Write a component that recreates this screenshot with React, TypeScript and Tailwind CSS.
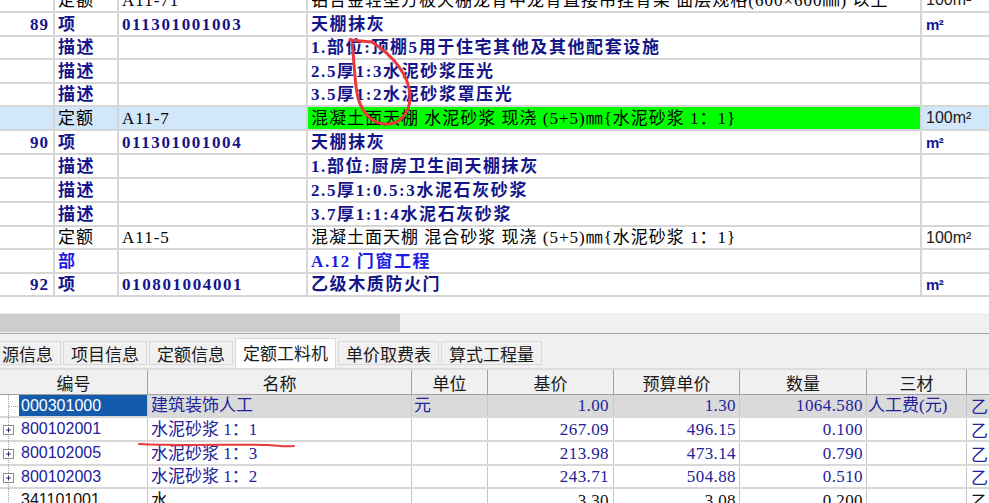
import React from 'react';

const SONG = "font-['Liberation_Serif','Noto_Sans_CJK_SC',serif]";
const HEI = "font-['Noto_Sans_CJK_SC',sans-serif]";
const SANS = "font-['Liberation_Sans','Noto_Sans_CJK_SC',sans-serif]";

type Kind = 'quota' | 'item' | 'desc' | 'part';
interface TopRow {
  h: string;
  kind: Kind;
  num?: string;
  code?: string;
  name: string;
  unit?: string;
  sel?: boolean;
  green?: boolean;
}

const topRows: TopRow[] = [
  { h: 'h-[24px]', kind: 'quota', code: 'A11-71', name: '铝合金轻型方板天棚龙骨中龙骨直接吊挂骨架 面层规格(600×600㎜) 以上', unit: '100m²' },
  { h: 'h-[24px]', kind: 'item', num: '89', code: '011301001003', name: '天棚抹灰', unit: 'm²' },
  { h: 'h-[23px]', kind: 'desc', name: '1.部位:顶棚5用于住宅其他及其他配套设施' },
  { h: 'h-[24px]', kind: 'desc', name: '2.5厚1:3水泥砂浆压光' },
  { h: 'h-[23px]', kind: 'desc', name: '3.5厚1:2水泥砂浆罩压光' },
  { h: 'h-[24px]', kind: 'quota', code: 'A11-7', name: '混凝土面天棚 水泥砂浆 现浇 (5+5)㎜{水泥砂浆 1：1}', unit: '100m²', sel: true, green: true },
  { h: 'h-[24px]', kind: 'item', num: '90', code: '011301001004', name: '天棚抹灰', unit: 'm²' },
  { h: 'h-[24px]', kind: 'desc', name: '1.部位:厨房卫生间天棚抹灰' },
  { h: 'h-[24px]', kind: 'desc', name: '2.5厚1:0.5:3水泥石灰砂浆' },
  { h: 'h-[24px]', kind: 'desc', name: '3.7厚1:1:4水泥石灰砂浆' },
  { h: 'h-[23px]', kind: 'quota', code: 'A11-5', name: '混凝土面天棚 混合砂浆 现浇 (5+5)㎜{水泥砂浆 1：1}', unit: '100m²' },
  { h: 'h-[24px]', kind: 'part', name: 'A.12 门窗工程' },
  { h: 'h-[23px]', kind: 'item', num: '92', code: '010801004001', name: '乙级木质防火门', unit: 'm²' },
];

const typeLabel: Record<Kind, string> = { quota: '定额', item: '项', desc: '描述', part: '部' };

function textCls(kind: Kind) {
  if (kind === 'quota') return 'text-black font-normal tracking-[1px]';
  if (kind === 'part') return 'text-[#1c1ce8] font-bold tracking-[1.6px]';
  return 'text-[#15158a] font-bold tracking-[1.6px]';
}

function TopGrid() {
  return (
    <div className="-mt-[11px]">
      {topRows.map((r, i) => {
        const t = textCls(r.kind);
        const selBg = r.sel ? 'bg-[#d2e8fa]' : '';
        return (
          <div key={i} className={`flex ${r.h} border-b-2 border-[#d6d6d6] ${SONG} text-[17px] leading-none`}>
            <div className={`w-[55px] shrink-0 border-r-2 border-[#d6d6d6] flex items-center justify-end pr-[4px] ${selBg} text-[#15158a] font-bold tracking-[1px]`}>
              {r.num}
            </div>
            <div className={`w-[64px] shrink-0 border-r-2 border-[#d6d6d6] flex items-center pl-[3px] ${selBg} ${t}`}>
              {typeLabel[r.kind]}
            </div>
            <div className={`w-[189px] shrink-0 border-r-2 border-[#d6d6d6] flex items-center pl-[3px] ${selBg} ${t}`}>
              {r.code}
            </div>
            <div className={`w-[614px] shrink-0 border-r-2 border-[#d6d6d6] flex items-center pl-[3px] whitespace-pre overflow-hidden ${r.green ? 'bg-[#00ff00]' : ''} ${t}`}>
              {r.name}
            </div>
            <div className={`flex-1 flex items-center pl-[4px] ${selBg} ${SANS} ${r.kind === 'item' ? 'text-[#15158a] font-bold text-[15px] tracking-[-0.5px]' : 'text-[#1a1a1a] text-[16px]'}`}>
              {r.unit}
            </div>
          </div>
        );
      })}
    </div>
  );
}

const tabs = ['项目信息', '定额信息', '定额工料机', '单价取费表', '算式工程量'];

function Tabs() {
  return (
    <div className={`h-[35px] bg-[#f0f0f0] border-t border-[#a6a6a6] flex items-start gap-[2px] overflow-hidden ${HEI} text-[17px] leading-none text-[#1a1a1a]`}>
      <div className="-ml-[6px] mt-[7px] h-[24px] px-[7px] border border-[#d9d9d9] bg-[#f0f0f0] flex items-center">源信息</div>
      {tabs.map((t) =>
        t === '定额工料机' ? (
          <div key={t} className="mt-[4px] h-[31px] px-[7px] border border-b-0 border-[#d9d9d9] bg-white flex items-center pb-[3px]">
            {t}
          </div>
        ) : (
          <div key={t} className="mt-[7px] h-[24px] px-[7px] border border-[#d9d9d9] bg-[#f0f0f0] flex items-center">
            {t}
          </div>
        )
      )}
    </div>
  );
}

const colW = ['w-[148px]', 'w-[264px]', 'w-[76px]', 'w-[126px]', 'w-[126px]', 'w-[127px]', 'w-[100px]'];
const headers = ['编号', '名称', '单位', '基价', '预算单价', '数量', '三材'];

interface BRow {
  h: string;
  code: string;
  name: string;
  unit: string;
  base: string;
  budget: string;
  qty: string;
  sancai: string;
  last: string;
  first?: boolean;
  plus?: boolean;
  black?: boolean;
}

const bRows: BRow[] = [
  { h: 'h-[23px]', code: '000301000', name: '建筑装饰人工', unit: '元', base: '1.00', budget: '1.30', qty: '1064.580', sancai: '人工费(元)', last: '乙', first: true },
  { h: 'h-[24px]', code: '800102001', name: '水泥砂浆 1：1', unit: '', base: '267.09', budget: '496.15', qty: '0.100', sancai: '', last: '乙', plus: true },
  { h: 'h-[24px]', code: '800102005', name: '水泥砂浆 1：3', unit: '', base: '213.98', budget: '473.14', qty: '0.790', sancai: '', last: '乙', plus: true },
  { h: 'h-[23px]', code: '800102003', name: '水泥砂浆 1：2', unit: '', base: '243.71', budget: '504.88', qty: '0.510', sancai: '', last: '乙', plus: true },
  { h: 'h-[24px]', code: '341101001', name: '水', unit: '', base: '3.30', budget: '3.08', qty: '0.200', sancai: '', last: '乙', black: true },
];

function Tree({ first, plus }: { first?: boolean; plus?: boolean }) {
  return (
    <svg width="19" height="24" viewBox="0 0 19 24" className="shrink-0 self-stretch">
      <line x1="8.5" y1="0" x2="8.5" y2="24" stroke="#a0a0a0" strokeWidth="1" strokeDasharray="1 1" />
      {first && <line x1="9" y1="11.5" x2="19" y2="11.5" stroke="#a0a0a0" strokeWidth="1" strokeDasharray="1 1" />}
      {plus && (
        <g>
          <rect x="3.5" y="7.5" width="10" height="9" fill="#ffffff" stroke="#8c8c8c" />
          <line x1="6" y1="12" x2="11" y2="12" stroke="#2a2a70" />
          <line x1="8.5" y1="9.5" x2="8.5" y2="14.5" stroke="#2a2a70" />
        </g>
      )}
    </svg>
  );
}

function BottomGrid() {
  return (
    <div className="border-t-2 border-[#dcdcdc]">
      <div className={`flex h-[25px] bg-[#f0f0f0] border-b border-[#a0a0a0] ${HEI} text-[17px] leading-none text-[#1a1a1a]`}>
        {headers.map((h, i) => (
          <div key={h} className={`${colW[i]} shrink-0 border-r border-[#a0a0a0] flex items-center justify-center`}>
            {h}
          </div>
        ))}
        <div className="flex-1" />
      </div>
      {bRows.map((r, i) => {
        const color = r.black ? 'text-[#111111]' : 'text-[#22229a]';
        const rowBg = r.first ? 'bg-[#dadada]' : 'bg-white';
        const cellB = 'shrink-0 border-r border-[#c8c8c8] flex items-center';
        return (
          <div key={i} className={`flex ${r.h} border-b-2 border-[#d8d8d8] ${rowBg} leading-none ${color}`}>
            <div className={`${colW[0]} ${cellB} bg-white`}>
              <Tree first={r.first} plus={r.plus} />
              <div className={`flex-1 self-stretch flex items-center pl-[2px] ${SANS} text-[16px] ${r.first ? 'bg-[#155bab] text-white' : ''}`}>
                {r.code}
              </div>
            </div>
            <div className={`${colW[1]} ${cellB} pl-[3px] ${SONG} text-[17px] whitespace-pre`}>{r.name}</div>
            <div className={`${colW[2]} ${cellB} pl-[2px] ${SONG} text-[17px]`}>{r.unit}</div>
            <div className={`${colW[3]} ${cellB} justify-end pr-[4px] ${SONG} text-[17px] tracking-[0.4px]`}>{r.base}</div>
            <div className={`${colW[4]} ${cellB} justify-end pr-[3px] ${SONG} text-[17px] tracking-[0.4px]`}>{r.budget}</div>
            <div className={`${colW[5]} ${cellB} justify-end pr-[3px] ${SONG} text-[17px] tracking-[0.4px]`}>{r.qty}</div>
            <div className={`${colW[6]} ${cellB} pl-[1px] ${SONG} text-[17px]`}>{r.sancai}</div>
            <div className={`flex-1 flex items-center pl-[4px] ${HEI} text-[17px]`}>{r.last}</div>
          </div>
        );
      })}
    </div>
  );
}

export default function App() {
  return (
    <div className="relative w-[989px] h-[503px] overflow-hidden bg-white">
      <TopGrid />
      <div className="h-[16px]" />
      <div className="h-[20px] bg-[#f0f0f0] flex items-center">
        <div className="w-[400px] h-[18px] bg-[#cdcdcd]" />
      </div>
      <Tabs />
      <BottomGrid />
      <svg className="absolute left-0 top-0 pointer-events-none" width="989" height="503" viewBox="0 0 989 503">
        <path
          d="M 350 40 L 372 42 C 392 55, 410 75, 410 97 C 410 115, 398 125, 385 124 C 370 123, 360 110, 357 93 C 354 75, 354 55, 352 44"
          fill="none"
          stroke="#e8393c"
          strokeWidth="3"
          strokeLinecap="round"
          strokeLinejoin="round"
        />
        <path
          d="M 139 444 C 180 446, 240 444, 268 445 C 280 446, 288 447, 294 446"
          fill="none"
          stroke="#e8393c"
          strokeWidth="2"
          strokeLinecap="round"
        />
      </svg>
    </div>
  );
}
